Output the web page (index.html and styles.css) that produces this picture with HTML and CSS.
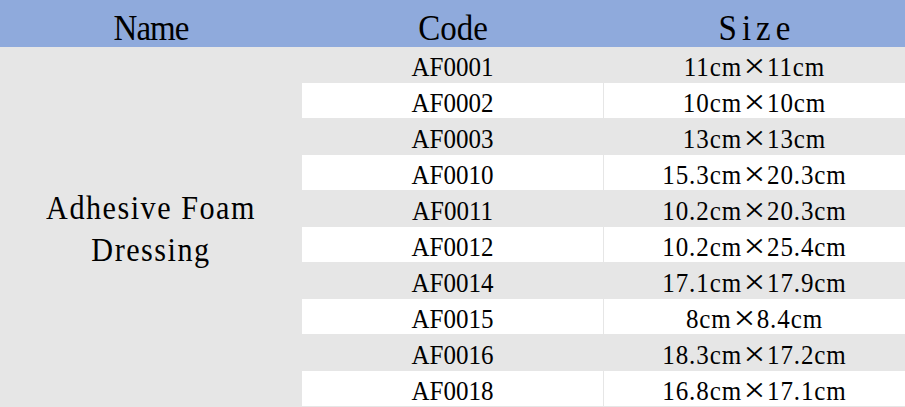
FILE: index.html
```html
<!DOCTYPE html>
<html>
<head>
<meta charset="utf-8">
<link rel="stylesheet" href="styles.css">
</head>
<body>
<table class="sheet">
  <colgroup><col class="c1"><col class="c2"><col class="c3"></colgroup>
  <thead>
    <tr><th class="h-name"><span class="t">Name</span></th><th class="h-code"><span class="t">Code</span></th><th class="h-size"><span class="t">Size</span></th></tr>
  </thead>
  <tbody>
    <tr class="g"><td class="name" rowspan="10"><span class="t">Adhesive Foam<br>Dressing</span></td><td class="code"><span class="t">AF0001</span></td><td class="size"><span class="t">11cm<span class="x">×</span>11cm</span></td></tr>
    <tr class="w"><td class="code"><span class="t">AF0002</span></td><td class="size"><span class="t">10cm<span class="x">×</span>10cm</span></td></tr>
    <tr class="g"><td class="code"><span class="t">AF0003</span></td><td class="size"><span class="t">13cm<span class="x">×</span>13cm</span></td></tr>
    <tr class="w"><td class="code"><span class="t">AF0010</span></td><td class="size"><span class="t">15.3cm<span class="x">×</span>20.3cm</span></td></tr>
    <tr class="g"><td class="code"><span class="t">AF0011</span></td><td class="size"><span class="t">10.2cm<span class="x">×</span>20.3cm</span></td></tr>
    <tr class="w"><td class="code"><span class="t">AF0012</span></td><td class="size"><span class="t">10.2cm<span class="x">×</span>25.4cm</span></td></tr>
    <tr class="g"><td class="code"><span class="t">AF0014</span></td><td class="size"><span class="t">17.1cm<span class="x">×</span>17.9cm</span></td></tr>
    <tr class="w"><td class="code"><span class="t">AF0015</span></td><td class="size"><span class="t">8cm<span class="x">×</span>8.4cm</span></td></tr>
    <tr class="g"><td class="code"><span class="t">AF0016</span></td><td class="size"><span class="t">18.3cm<span class="x">×</span>17.2cm</span></td></tr>
    <tr class="w"><td class="code"><span class="t">AF0018</span></td><td class="size"><span class="t">16.8cm<span class="x">×</span>17.1cm</span></td></tr>
  </tbody>
</table>
</body>
</html>
```
FILE: styles.css
```css
html, body {
  margin: 0;
  padding: 0;
  background: #ffffff;
}
.sheet {
  width: 905px;
  table-layout: fixed;
  border-collapse: separate;
  border-spacing: 0;
  font-family: "Liberation Serif", "Times New Roman", serif;
  color: #000;
}
.c1 { width: 302px; }
.c2 { width: 302px; }
.c3 { width: 301px; }
.sheet th {
  height: 47px;
  padding: 11px 0 0 0;
  box-sizing: border-box;
  background: #8faadc;
  font-weight: normal;
  font-size: 33px;
  line-height: 34px;
  text-align: center;
  vertical-align: top;
}
.sheet th.h-name { letter-spacing: -1px; }
.sheet th.h-size { letter-spacing: 5px; padding-left: 5px; }
.sheet td {
  height: 36px;
  padding: 7px 0 0 0;
  box-sizing: border-box;
  border-bottom: 1px solid #e6e6e6;
  font-size: 25px;
  line-height: 26px;
  text-align: center;
  vertical-align: top;
}
.sheet td.code {
  border-right: 1px solid #e6e6e6;
}
.sheet td.size { letter-spacing: 0.9px; }
.sheet td.name {
  background: #e6e6e6;
  font-size: 30.2px;
  line-height: 38px;
  letter-spacing: 1.5px;
  padding: 4px 0 0 0;
  vertical-align: middle;
}
.g td { background: #e6e6e6; }
.w td { background: #ffffff; }
.t {
  display: inline-block;
  transform: scaleY(1.1);
  white-space: nowrap;
}
.x {
  display: inline-block;
  width: 25px;
  text-align: center;
  letter-spacing: 0;
  transform: scale(1.55, 1.3);
}
```
